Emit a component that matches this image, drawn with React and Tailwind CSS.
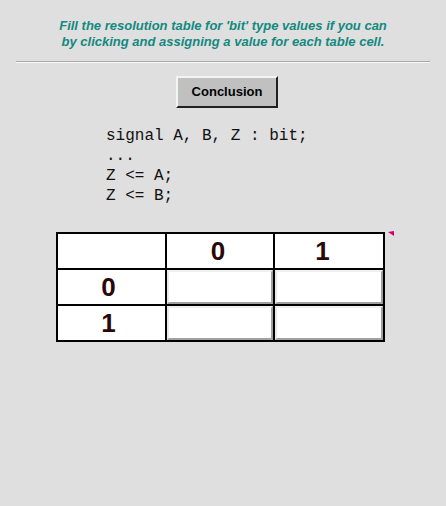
export default function App() {
  const cols = ["0", "1"];
  // header digits sit a little left of centre in the original
  const headPad = { 0: "pr-[4px]", 1: "pr-[13px]" };

  return (
    <div className="w-[446px] h-[506px] bg-[#dfdfdf] font-['Liberation_Sans',Arial,sans-serif]">
      <p className="pt-[18px] text-center text-[13px] leading-[16px] font-bold italic text-[#13897f]">
        Fill the resolution table for 'bit' type values if you can
        <br />
        by clicking and assigning a value for each table cell.
      </p>

      <div className="mt-[11px] mx-[16px] border-t border-b border-t-[#a8a8a8] border-b-[#f8f8f8]" />

      <div className="pl-[176px] mt-[13px]">
        <button className="w-[102px] h-[32px] bg-[#c0c0c0] border-2 border-t-[#f4f4f4] border-l-[#f4f4f4] border-r-[#202020] border-b-[#202020] text-[13px] font-bold text-black">
          Conclusion
        </button>
      </div>

      <pre className="ml-[106px] mt-[18px] font-['Liberation_Mono','Courier_New',monospace] text-[16px] leading-[20px] text-[#111]">
        {"signal A, B, Z : bit;\n...\nZ <= A;\nZ <= B;"}
      </pre>

      <div className="ml-[56px] mt-[26px] flex items-start">
        <div className="grid grid-cols-[107px_106px_108px] border-2 border-black bg-black gap-[2px] text-[26px] leading-none font-bold text-[#2a0808]">
          <div className="h-[34px] bg-white" />
          {cols.map((c) => (
            <div key={c} className={"h-[34px] bg-white flex items-center justify-center " + headPad[c]}>
              {c}
            </div>
          ))}
          {cols.map((r) => (
            <>
              <div key={"l" + r} className="h-[34px] bg-white flex items-center justify-center pr-[6px]">
                {r}
              </div>
              {cols.map((c) => (
                <button
                  key={r + c}
                  className="h-[34px] bg-white border-2 border-t-[#f0f0f0] border-l-[#e8e8e8] border-r-[#a0a0a0] border-b-[#a0a0a0]"
                />
              ))}
            </>
          ))}
        </div>
        <svg width="8" height="6" viewBox="0 0 8 6" className="ml-[2px] mt-[-1px]">
          <polygon points="1,1 7,0 7,5" fill="#d4006a" />
        </svg>
      </div>
    </div>
  );
}
